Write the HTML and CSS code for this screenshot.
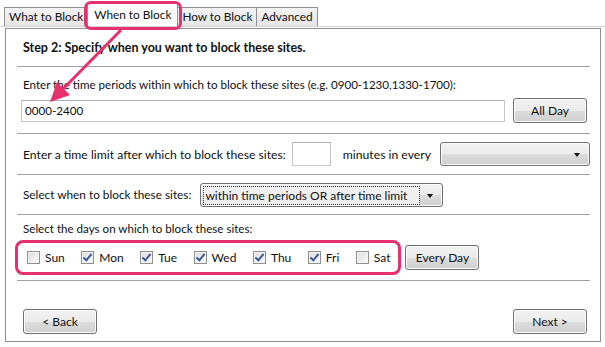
FILE: index.html
```html
<!DOCTYPE html>
<html lang="en">
<head>
  <meta charset="UTF-8" />
  <title>When to Block</title>
  <link rel="stylesheet" href="styles.css">
</head>
<body>
  <div class="window">
    <div class="tabs">
      <div class="tab">What to Block</div>
      <div class="tab active">When to Block</div>
      <div class="tab">How to Block</div>
      <div class="tab">Advanced</div>
    </div>

    <div class="panel">
      <div class="section head">
        <b>Step 2: Specify when you want to block these sites.</b>
      </div>

      <div class="section periods">
        <div class="label">Enter the time periods within which to block these sites (e.g. 0900-1230,1330-1700):</div>
        <div class="row">
          <div class="field wide">0000-2400</div>
          <button class="btn">All Day</button>
        </div>
      </div>

      <div class="section limit">
        <div class="row">
          <span>Enter a time limit after which to block these sites:</span>
          <div class="field small"></div>
          <span class="minutes">minutes in every</span>
          <div class="combo empty"><span class="caret"></span></div>
        </div>
      </div>

      <div class="section mode-row">
        <div class="row">
          <span>Select when to block these sites:</span>
          <div class="combo mode"><span class="focus">within time periods OR after time limit</span><span class="caret"></span></div>
        </div>
      </div>

      <div class="section days">
        <div class="label">Select the days on which to block these sites:</div>
        <div class="row">
          <div class="daybox">
            <label class="day"><span class="check"></span>Sun</label>
            <label class="day"><span class="check on"></span>Mon</label>
            <label class="day"><span class="check on"></span>Tue</label>
            <label class="day"><span class="check on"></span>Wed</label>
            <label class="day"><span class="check on"></span>Thu</label>
            <label class="day"><span class="check on"></span>Fri</label>
            <label class="day"><span class="check"></span>Sat</label>
          </div>
          <button class="btn">Every Day</button>
        </div>
      </div>

      <div class="nav">
        <button class="btn">&lt; Back</button>
        <button class="btn">Next &gt;</button>
      </div>
    </div>

    <!-- annotation arrow -->
    <svg class="arrow" width="140" height="110" viewBox="0 0 140 110">
      <line x1="121" y1="30" x2="62" y2="90" stroke="#e8306c" stroke-width="3" />
      <polygon points="50,102 57,82 70,95" fill="#e8306c" />
    </svg>
  </div>
</body>
</html>
```

FILE: styles.css
```css
body {
  margin: 0;
  background: #fff;
  font-family: Lato, "Noto Sans", sans-serif;
  font-size: 11.6px;
  color: #111;
}
.window {
  position: relative;
  width: 605px;
  height: 347px;
  white-space: nowrap;
}
.tabs {
  display: flex;
  padding: 7px 0 0 4px;
  height: 19px;
  border-bottom: 1px solid #d4d4d4;
  font-size: 11.8px;
}
.tab {
  position: relative;
  height: 19px;
  line-height: 18px;
  padding: 0 4px;
  border: 1px solid #8e8f8f;
  border-bottom: none;
  margin-right: -1px;
  background: linear-gradient(#f3f3f3, #e6e6e6);
  box-sizing: border-box;
}
.tab.active {
  background: #fff;
  height: 23px;
  margin-top: -4px;
  padding: 0 6px;
  line-height: 22px;
  z-index: 2;
}
.tab.active::after {
  content: "";
  position: absolute;
  left: -4px;
  top: -3px;
  right: -5px;
  bottom: -4px;
  border: 3px solid #e8306c;
  border-radius: 7px;
}
.panel {
  margin: 1px 4px 0 5px;
  height: 312px;
  border: 1px solid #8e8f8f;
  padding: 0 10px 0 11px;
  display: flex;
  flex-direction: column;
}
.section {
  border-bottom: 1px solid #a0a0a0;
  padding: 0 0 0 6px;
}
.head {
  height: 37px;
  line-height: 38px;
  font-size: 12.5px;
}
.label {
  margin-top: 9px;
  line-height: 18px;
}
.row {
  display: flex;
  align-items: center;
}
.row > * {
  flex-shrink: 0;
}
.periods .row {
  padding: 4px 0 10px 0;
  margin-left: -2px;
  gap: 8px;
}
.field {
  height: 22px;
  box-sizing: border-box;
  border: 1px solid #c4c6cc;
  border-top-color: #abadb3;
  background: #fff;
  line-height: 20px;
  padding: 0 3px;
}
.wide {
  width: 484px;
}
.small {
  width: 39px;
  height: 24px;
  margin-left: 6px;
}
.minutes {
  margin-left: 12px;
}
.limit .row {
  height: 40px;
  font-size: 12.2px;
}
.mode-row .row {
  height: 39px;
  font-size: 11.8px;
}
.combo {
  position: relative;
  height: 24px;
  box-sizing: border-box;
  border: 1px solid #707070;
  border-radius: 3px;
  background: linear-gradient(#f2f2f2 0%, #ebebeb 50%, #dddddd 51%, #cfcfcf 100%);
  box-shadow: inset 0 0 0 1px #fbfbfb;
}
.combo.empty {
  flex: 1;
  flex-shrink: 1;
  margin-left: 9px;
  margin-right: 0;
}
.combo.mode {
  width: 243px;
  margin-left: 9px;
  padding: 2px 22px 0 2px;
  font-size: 12px;
}
.focus {
  display: block;
  border: 1px dotted #333;
  line-height: 17px;
  padding: 0 1px;
  background: #f0f0f0;
}
.caret {
  position: absolute;
  right: 9px;
  top: 10px;
  border-left: 3px solid transparent;
  border-right: 3px solid transparent;
  border-top: 4px solid #111;
}
.days .label {
  margin-top: 5px;
}
.days .row {
  padding: 2px 0 5px 0;
  margin-left: -8px;
  font-size: 12px;
}
.daybox {
  display: flex;
  align-items: center;
  height: 29px;
  padding: 0 8px 0 9px;
  border: 3px solid #e8306c;
  border-radius: 8px;
}
.day {
  display: flex;
  align-items: center;
  margin-right: 16.5px;
}
.day:last-child {
  margin-right: 0;
}
.check {
  width: 13px;
  height: 13px;
  box-sizing: border-box;
  border: 1px solid #8f8f8f;
  margin-right: 5px;
  background: linear-gradient(135deg, #dcdcdc, #fafafa);
  box-shadow: inset 0 0 0 1px #f4f4f4;
  position: relative;
}
.check.on::after {
  content: "";
  position: absolute;
  left: 3px;
  top: 0;
  width: 3px;
  height: 7px;
  border-right: 2px solid #3d5a98;
  border-bottom: 2px solid #3d5a98;
  transform: rotate(40deg);
}
.btn {
  font-family: inherit;
  font-size: 12px;
  color: #111;
  height: 25px;
  border: 1px solid #707070;
  border-radius: 3px;
  background: linear-gradient(#f2f2f2 0%, #ebebeb 50%, #dddddd 51%, #cfcfcf 100%);
  box-shadow: inset 0 0 0 1px #fcfcfc;
  width: 74px;
  padding: 0;
}
.days .btn {
  margin-left: 4px;
}
.nav {
  display: flex;
  justify-content: space-between;
  padding: 28px 3px 0 6px;
}
.arrow {
  position: absolute;
  left: 0;
  top: 0;
  z-index: 3;
}
```
